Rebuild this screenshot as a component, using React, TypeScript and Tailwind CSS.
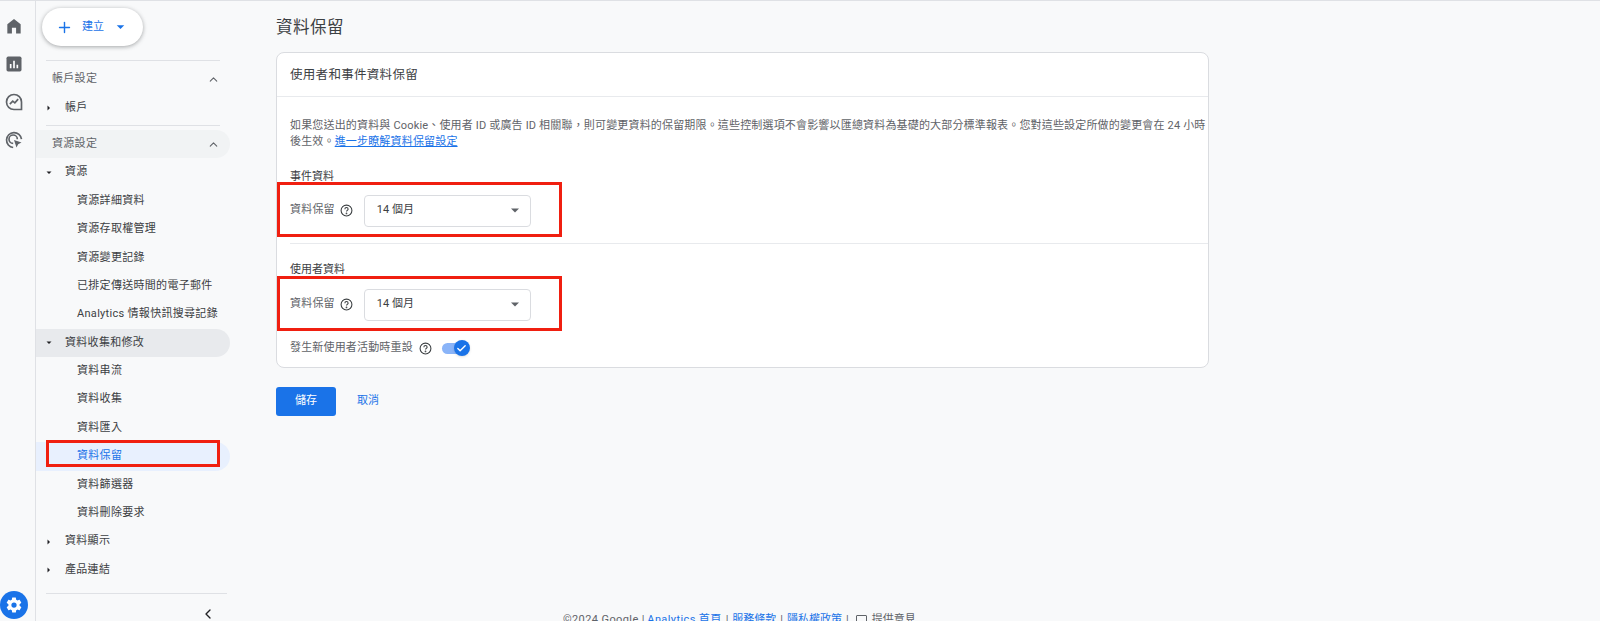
import { ChevronUp, ChevronLeft, Plus, Check } from "lucide-react";

const fontStack = "font-['Roboto','Noto_Sans_CJK_TC',sans-serif]";

function Caret({ open, color = "#202124", size = 10 }: { open?: boolean; color?: string; size?: number }) {
  return (
    <svg width={size} height={size} viewBox="0 0 10 10" className="shrink-0">
      {open ? <path d="M2.500 3.500h5L5 6z" fill={color} /> : <path d="M3.500 2.500v5L6 5z" fill={color} />}
    </svg>
  );
}

function HelpIcon() {
  return (
    <svg width="13" height="13" viewBox="0 0 24 24" fill="none" stroke="#3c4043" strokeWidth="2" className="shrink-0">
      <circle cx="12" cy="12" r="10" />
      <path d="M9 9.500a3 3 0 0 1 6 0c0 2-3 2.500-3 4.500" />
      <circle cx="12" cy="17.500" r="0.6" fill="#3c4043" />
    </svg>
  );
}

function Rail() {
  return (
    <div className="w-[36px] shrink-0 border-r border-[#dfe1e5] flex flex-col items-start pl-[4px] pt-[15px] relative">
      <svg width="20" height="20" viewBox="0 0 24 24" fill="#5f6368">
        <path d="M4 21V10l8-6.500 8 6.500v11h-5.500v-7h-5v7z" />
      </svg>
      <svg width="20" height="20" viewBox="0 0 24 24" className="mt-[18px]">
        <rect x="3" y="3" width="18" height="18" rx="2" fill="#5f6368" />
        <path d="M7 12h2v5H7zM11 8h2v9h-2zM15 13h2v4h-2z" fill="#fff" />
      </svg>
      <svg width="20" height="20" viewBox="0 0 24 24" fill="none" stroke="#5f6368" strokeWidth="2" className="mt-[18px]">
        <path d="M21 12a9 9 0 1 0-9 9h9z" />
        <path d="M7 14.500l3.500-3.500 2.500 2 4-4.500" />
      </svg>
      <svg width="20" height="20" viewBox="0 0 24 24" fill="none" stroke="#5f6368" strokeWidth="2" className="mt-[18px]">
        <path d="M11 21a9 9 0 1 1 10-10" />
        <path d="M11 16a5 5 0 1 1 5-5" />
        <path d="M12 12l9 3-4 2-2 4z" fill="#5f6368" stroke="none" />
      </svg>
      <div className="absolute left-0 top-[590px] w-[28px] h-[28px] rounded-full bg-[#1a73e8] flex items-center justify-center">
        <svg width="18" height="18" viewBox="0 0 24 24" fill="#fff">
          <path d="M19.400 13c.04-.3.1-.7.1-1s-.06-.7-.1-1l2.100-1.600c.2-.15.25-.4.120-.65l-2-3.450c-.12-.22-.38-.3-.6-.22l-2.500 1c-.5-.4-1.080-.72-1.680-.97L14.500 2.400a.5.5 0 0 0-.5-.4h-4a.5.5 0 0 0-.5.4l-.37 2.650c-.6.25-1.170.58-1.680.97l-2.500-1c-.22-.08-.48 0-.6.22l-2 3.450c-.13.22-.07.5.12.65L4.600 11c-.04.3-.1.7-.1 1s.06.7.1 1l-2.100 1.600c-.2.15-.25.43-.12.65l2 3.450c.12.22.38.3.6.22l2.500-1c.5.4 1.080.72 1.680.97l.37 2.650c.04.23.25.4.5.4h4c.25 0 .46-.17.5-.4l.37-2.650c.6-.25 1.170-.58 1.680-.97l2.500 1c.22.08.48 0 .6-.22l2-3.450c.13-.22.07-.5-.12-.65zM12 15.500a3.500 3.500 0 1 1 0-7 3.500 3.500 0 0 1 0 7z" />
        </svg>
      </div>
    </div>
  );
}

function Parent({ label, open, active }: { label: string; open?: boolean; active?: boolean }) {
  return (
    <div className={`h-[28.4px] flex items-center rounded-r-full pl-[8px] text-[11px] text-[#3c4043] tracking-[0.3px] ${active ? "bg-[#e8eaed]" : ""}`}>
      <Caret open={open} />
      <span className="ml-[11px]">{label}</span>
    </div>
  );
}

function Child({ label, selected }: { label: string; selected?: boolean }) {
  return (
    <div className={`relative h-[28.4px] flex items-center rounded-r-full pl-[41px] text-[11px] tracking-[0.3px] ${selected ? "bg-[#e8f0fe] text-[#1a73e8]" : "text-[#3c4043]"}`}>
      {label}
      {selected && <div className="absolute left-[10px] top-[-2px] w-[174px] h-[27px] border-[3px] border-[#f01f10]" />}
    </div>
  );
}

function Sidebar() {
  return (
    <div className="w-[230px] shrink-0">
      <div className="w-[194px]">
        <div className="ml-[6px] mt-[7px] w-[101px] h-[38px] bg-white rounded-full shadow-[0_1px_4px_rgba(60,64,67,0.45)] flex items-center pl-[14px] text-[#1a73e8]">
          <Plus size={17} strokeWidth={2} />
          <span className="ml-[9px] text-[11px]">建立</span>
          <span className="ml-[9px]">
            <Caret open color="#1a73e8" size={15} />
          </span>
        </div>
        <div className="ml-[10px] mr-[10px] mt-[14px] border-t border-[#dfe1e5]" />
        <div className="h-[33px] pt-[4px] flex items-center justify-between pl-[16px] pr-[10px] text-[11px] text-[#5f6368] tracking-[0.3px]">
          <span>帳戶設定</span>
          <ChevronUp size={13} color="#5f6368" />
        </div>
        <Parent label="帳戶" />
        <div className="ml-[10px] mr-[10px] mt-[3px] border-t border-[#dfe1e5]" />
        <div className="mt-[4px] h-[28px] flex items-center justify-between rounded-r-full bg-[#f1f3f4] pl-[16px] pr-[10px] text-[11px] text-[#5f6368] tracking-[0.3px]">
          <span>資源設定</span>
          <ChevronUp size={13} color="#5f6368" />
        </div>
        <Parent label="資源" open />
        <Child label="資源詳細資料" />
        <Child label="資源存取權管理" />
        <Child label="資源變更記錄" />
        <Child label="已排定傳送時間的電子郵件" />
        <Child label="Analytics 情報快訊搜尋記錄" />
        <Parent label="資料收集和修改" open active />
        <Child label="資料串流" />
        <Child label="資料收集" />
        <Child label="資料匯入" />
        <Child label="資料保留" selected />
        <Child label="資料篩選器" />
        <Child label="資料刪除要求" />
        <Parent label="資料顯示" />
        <Parent label="產品連結" />
        <div className="ml-[10px] mt-[9px] w-[181px] border-t border-[#dfe1e5]" />
        <div className="flex justify-end mt-[12px] pr-[14px]">
          <ChevronLeft size={16} color="#202124" />
        </div>
      </div>
    </div>
  );
}

function RetentionRow() {
  return (
    <div className="w-[285px] h-[55px] border-[3px] border-[#f01f10] -ml-[13px] pl-[10px] pt-[2px] flex items-center text-[11px]">
      <span className="text-[#5f6368] tracking-[0.2px]">資料保留</span>
      <span className="ml-[5px]"><HelpIcon /></span>
      <div className="ml-[11px] w-[167px] h-[32px] bg-white border border-[#dadce0] rounded-[4px] flex items-center justify-between pl-[12px] pr-[7px] text-[#3c4043]">
        <span>14 個月</span>
        <Caret open color="#5f6368" size={16} />
      </div>
    </div>
  );
}

function RetentionCard() {
  return (
    <div className="w-[933px] h-[316px] bg-white border border-[#dadce0] rounded-[8px] mt-[12px] overflow-hidden">
      <div className="h-[44px] pt-[2px] border-b border-[#e8eaed] pl-[13px] flex items-center text-[12.500px] text-[#3c4043] tracking-[0.3px]">
        使用者和事件資料保留
      </div>
      <div className="pl-[13px]">
        <p className="mt-[21px] w-[918px] text-[11px] leading-[15.500px] text-[#5f6368] tracking-[0.17px]">
          如果您送出的資料與 Cookie、使用者 ID 或廣告 ID 相關聯，則可變更資料的保留期限。這些控制選項不會影響以匯總資料為基礎的大部分標準報表。您對這些設定所做的變更會在 24 小時後生效。
          <span className="text-[#1a73e8] underline">進一步瞭解資料保留設定</span>
        </p>
        <div className="mt-[20px] -mb-[3px] text-[11px] leading-[16px] text-[#3c4043]">事件資料</div>
        <RetentionRow />
        <div className="mt-[6px] border-t border-[#e8eaed]" />
        <div className="mt-[18px] -mb-[2px] text-[11px] leading-[16px] text-[#3c4043]">使用者資料</div>
        <RetentionRow />
        <div className="mt-[7px] h-[20px] flex items-center text-[11px] text-[#5f6368] tracking-[0.17px]">
          <span>發生新使用者活動時重設</span>
          <span className="ml-[6px]"><HelpIcon /></span>
          <div className="relative ml-[10px] w-[28px] h-[14px]">
            <div className="absolute left-0 top-[2px] w-[22px] h-[11px] rounded-full bg-[#8ab4f8]" />
            <div className="absolute right-0 top-[-1px] w-[16px] h-[16px] rounded-full bg-[#1a73e8] flex items-center justify-center shadow-sm">
              <Check size={11} color="#fff" strokeWidth={3} />
            </div>
          </div>
        </div>
      </div>
    </div>
  );
}

export default function App() {
  return (
    <div className={`h-[621px] w-[1600px] overflow-hidden flex flex-col bg-[#f8f9fa] ${fontStack}`}>
      <div className="h-px shrink-0 bg-[#dfe1e5]" />
      <div className="flex flex-1 min-h-0">
        <Rail />
        <Sidebar />
        <main className="flex-1 pl-[10px] relative">
          <h1 className="mt-[15px] text-[16.500px] leading-[24px] text-[#3c4043] font-normal tracking-[0.5px]">資料保留</h1>
          <RetentionCard />
          <div className="mt-[19px] flex items-center">
            <button className="w-[60px] h-[29px] bg-[#1a73e8] rounded-[3px] text-white text-[11px]">儲存</button>
            <span className="ml-[21px] text-[11px] text-[#1a73e8]">取消</span>
          </div>
          <div className="absolute left-[297px] top-[609px] h-[20px] flex items-center text-[11px] text-[#5f6368] whitespace-nowrap">
            <span className="tracking-[0.4px]">©2024 Google</span>
            <span className="mx-[3px]">|</span>
            <span className="text-[#1a73e8] tracking-[0.4px]">Analytics 首頁</span>
            <span className="mx-[4px]">|</span>
            <span className="text-[#1a73e8]">服務條款</span>
            <span className="mx-[4px]">|</span>
            <span className="text-[#1a73e8]">隱私權政策</span>
            <span className="mx-[4px]">|</span>
            <span className="ml-[3px] w-[11px] h-[11px] border border-[#5f6368] rounded-[1px] mr-[5px]" />
            <span>提供意見</span>
          </div>
        </main>
      </div>
    </div>
  );
}
